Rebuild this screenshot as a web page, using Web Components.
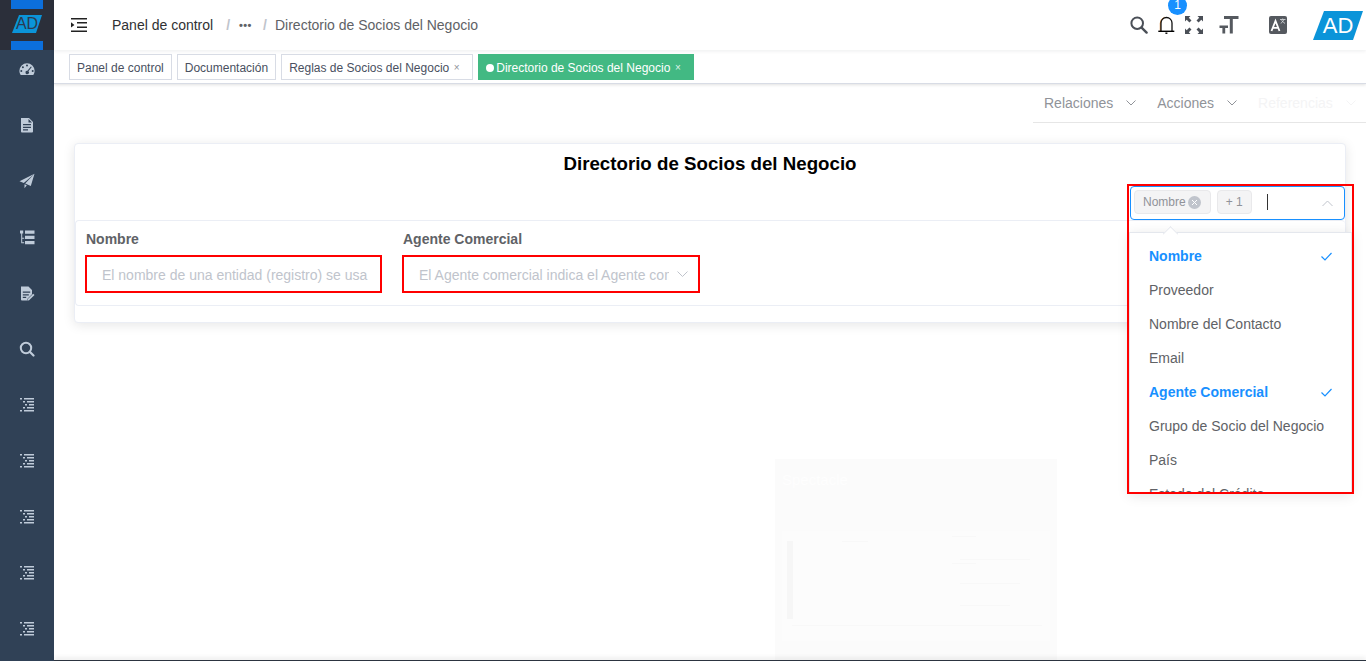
<!DOCTYPE html>
<html lang="es">
<head>
<meta charset="utf-8">
<title>Directorio de Socios del Negocio</title>
<style>
	html, body { margin: 0; height: 100%; overflow: hidden; }
	body { font-family: "Liberation Sans", Arial, sans-serif; font-size: 14px; background: #fff; }
</style>
</head>
<body>
<app-shell>
	<side-bar slot="side"></side-bar>
	<nav-bar slot="top"></nav-bar>
	<tags-view slot="top"></tags-view>
	<action-strip></action-strip>
	<search-card title="Directorio de Socios del Negocio">
		<field-box label="Nombre" hint="El nombre de una entidad (registro) se usa como"></field-box>
		<field-box label="Agente Comercial" hint="El Agente comercial indica el Agente comercial" chevron></field-box>
	</search-card>
	<ghost-shot></ghost-shot>
</app-shell>

<script>
const icons = {
	gauge: '<path fill="currentColor" fill-rule="evenodd" d="M8 2.2a7.6 7.6 0 0 0-7.6 7.6c0 1.6.5 3 1.3 4.2h12.6c.8-1.200 1.300-2.600 1.300-4.200A7.600 7.600 0 0 0 8 2.200zM8 3.600a1 1 0 1 1 0 2 1 1 0 0 1 0-2zM3.900 5.300a1 1 0 1 1 0 2 1 1 0 0 1 0-2zM2.300 9.100a1 1 0 1 1 0 2 1 1 0 0 1 0-2zM13.700 9.100a1 1 0 1 1 0 2 1 1 0 0 1 0-2zM11.900 5.400l.9.600-3.400 4.300a1.700 1.700 0 1 1-1-.5z"/>',
	doc: '<path fill="currentColor" fill-rule="evenodd" d="M2 1h8l4 4v9.500a.9.900 0 0 1-.9.900H2.900a.9.900 0 0 1-.9-.9zM9.500 2v3.500H13zM4 7v1.300h8V7zM4 9.700V11h8V9.700zM4 12.300v1.200h5v-1.200z"/>',
	send: '<path fill="currentColor" d="M15.500.8.500 8.300l4.300 1.800zM15.500.8 6.200 10.600l5.600 2.500zM5.500 11.200v4l2.300-3z"/>',
	tree: '<path fill="currentColor" d="M1 1.500h3.200v3H3.200v4.200h2v1h-2v3.600h2v1H2.200V4.500H1zM6 1.500h9.500v3.300H6zM6 6.800h9.500V10H6zM6 12h9.500v3.200H6z"/>',
	docedit: '<path fill="currentColor" fill-rule="evenodd" d="M2 1.500h7.500L13 5v4.200l-4.500 4.600-.4 1.700H2.900a.9.900 0 0 1-.9-.9zM3.800 6.500v1.300h7.400V6.500zM3.800 9.200v1.300h6V9.200zM3.800 11.800v1.200h3.400v-1.200z"/><path fill="currentColor" d="M14.200 8.700l1.300 1.300-5.400 5.300-1.700.4.400-1.700z"/>',
	search: '<path fill="none" stroke="currentColor" stroke-width="2" d="M7 1.800a5.200 5.200 0 1 0 0 10.400A5.200 5.200 0 0 0 7 1.800z"/><path fill="none" stroke="currentColor" stroke-width="2.200" stroke-linecap="round" d="M11 11l3.500 3.500"/>',
	list: '<path fill="currentColor" d="M1 1h2v1.500H1zM5 1h10v1.500H5zM4 4h2v1.500H4zM8 4h7v1.500H8zM6 7h2v1.500H6zM10 7h5v1.500h-5zM4 10h2v1.500H4zM8 10h7v1.500H8zM1 13h2v1.500H1zM5 13h10v1.500H5z"/>'
};

const svg = (name, size = 16) => `<svg width="${size}" height="${size}" viewBox="0 0 16 16">${icons[name]}</svg>`;

// plain helper, every element below just keeps its markup in the shadow root
const define = (tag, html, setup) => {
	customElements.define(tag, class extends HTMLElement {
		constructor() {
			super();
			this.attachShadow({ mode: 'open' }).innerHTML = typeof html === 'function' ? html(this) : html;
		}
		connectedCallback() {
			if (setup) setup.call(this);
		}
	});
};

define('app-shell', `
	<style>
		:host { display: flex; height: 661px; width: 1366px; overflow: hidden; position: relative; }
		.side { flex: 0 0 54px; }
		.main { flex: 1; min-width: 0; display: flex; flex-direction: column; }
		.content { flex: 1; min-height: 0; position: relative; }
		.foot { flex: 0 0 1px; background: #2c3440; box-shadow: 0 -1px 5px rgba(0, 0, 0, .3); position: relative; }
	</style>
	<div class="side"><slot name="side"></slot></div>
	<div class="main">
		<slot name="top"></slot>
		<div class="content"><slot></slot></div>
		<div class="foot"></div>
	</div>
`);

define('side-bar', `
	<style>
		:host { display: flex; flex-direction: column; height: 661px; background: #304156; color: #bfcbd9; }
		.logo { flex: 0 0 50px; background: #2b2f3a; display: flex; flex-direction: column; justify-content: space-between; align-items: center; position: relative; }
		.logo i { display: block; width: 32px; height: 9px; background: #0c6fdc; }
		.logo svg { position: absolute; left: 12px; top: 15px; }
		.logo b { position: absolute; left: 12px; top: 15px; width: 30px; text-align: center; font: 400 16px/18px "Liberation Sans", sans-serif; color: #2b3a4f; }
		nav { display: flex; flex-direction: column; align-items: center; gap: 40px; padding-top: 11px; }
		nav svg { display: block; }
	</style>
	<div class="logo">
		<i></i>
		<svg width="30" height="18" viewBox="0 0 30 18"><path fill="#0b94d9" d="M7 0h23l-6 18H0z"/></svg>
		<b>AD</b>
		<i></i>
	</div>
	<nav>
		${['gauge', 'doc', 'send', 'tree', 'docedit', 'search', 'list', 'list', 'list', 'list', 'list'].map(n => svg(n)).join('')}
	</nav>
`);

define('nav-bar', `
	<style>
		:host { display: flex; align-items: center; height: 50px; flex: 0 0 50px; background: #fff; box-shadow: 0 1px 4px rgba(0, 21, 41, .08); position: relative; z-index: 2; padding-left: 17px; color: #303133; }
		.burger { display: block; margin-right: 25px; }
		.crumb { white-space: nowrap; }
		.sep { color: #c0c4cc; margin: 0 9px 0 13px; font-weight: 700; }
		.dots { color: #606266; font-size: 11px; letter-spacing: .4px; font-weight: 700; line-height: 1; width: 12px; white-space: nowrap; }
		.sep.two { margin: 0 8px 0 12px; }
		.last { color: #606266; }
		.tools { margin-left: auto; display: flex; align-items: center; height: 100%; position: relative; }
		.tools svg { display: block; flex: none; }
		.bell { position: relative; margin-left: 10px; }
		.count { position: absolute; left: 1px; top: -20px; width: 19px; height: 19px; border-radius: 10px; background: #1890ff; color: #fff; font-size: 12px; line-height: 19px; text-align: center; margin-left: 9px; }
		.logo { position: relative; width: 50px; height: 29px; margin: 0 3px 0 26px; }
		.logo b { position: absolute; inset: 0; text-align: center; color: #fff; font: 400 22px/29px "Liberation Sans", sans-serif; }
	</style>
	<svg class="burger" width="16" height="14" viewBox="0 0 16 14"><path fill="#222" d="M0 0h16v1.500H0zM6 4h10v1.500H6zM6 8.500h10V10H6zM0 12.500h16V14H0zM0 4.200 3.400 6.900 0 9.600z"/></svg>
	<span class="crumb">Panel de control</span>
	<span class="sep">/</span>
	<span class="dots">•••</span>
	<span class="sep two">/</span>
	<span class="crumb last">Directorio de Socios del Negocio</span>
	<div class="tools">
		<svg width="18" height="18" viewBox="0 0 18 18" style="color:#4a4f57">
			<circle cx="7.200" cy="7.200" r="5.800" fill="none" stroke="currentColor" stroke-width="2"/>
			<path stroke="currentColor" stroke-width="2.400" stroke-linecap="round" d="M11.600 11.600 16.600 16.600"/>
		</svg>
		<span class="bell">
			<svg width="18" height="18" viewBox="0 0 18 18">
				<path fill="none" stroke="#d0761f" stroke-width="1" d="M2.300 15V7a6.200 6.200 0 0 1 4-5.600"/>
				<path fill="none" stroke="#111" stroke-width="1.300" d="M3 15V7a5.500 5.500 0 0 1 11 0v8"/>
				<path stroke="#000" stroke-width="1.400" d="M.3 15.300h16"/>
				<path stroke="#000" stroke-width="1.400" d="M7.400 17.200h2"/>
			</svg>
			<span class="count">1</span>
		</span>
		<svg width="18" height="18" viewBox="0 0 18 18" style="margin-left:9px" fill="#4a4f57">
			<path d="M0 0h5.500L3.800 1.700 6.500 4.400 4.400 6.500 1.700 3.800 0 5.500zM18 0v5.500l-1.700-1.700-2.700 2.700-2.100-2.100 2.700-2.700L12.500 0zM0 18v-5.500l1.700 1.700 2.700-2.700 2.100 2.100-2.700 2.700L5.500 18zM18 18h-5.500l1.700-1.700-2.700-2.700 2.100-2.100 2.700 2.700 1.700-1.700z"/>
		</svg>
		<svg width="20" height="20" viewBox="0 0 20 20" style="margin-left:16px" fill="#55595f">
			<path d="M5 1h14.500v3h-5.700v14.500h-3V4H5zM.5 10.500H9v2.400H6.200v5.600H3.400v-5.600H.5z"/>
		</svg>
		<svg width="18" height="18" viewBox="0 0 18 18" style="margin-left:30px">
			<rect width="18" height="18" rx="2" fill="#55595f"/>
			<path fill="none" stroke="#fff" stroke-width="1.800" d="M2.500 15 6.500 5l4 10M4 11.800h5"/>
			<path fill="none" stroke="#cfd2d6" stroke-width=".9" d="M11 3.500h5.500M13.700 2.500v1M12 7.500l3-4M12.500 4.500l3.500 3"/>
		</svg>
		<span class="logo">
			<svg width="50" height="29" viewBox="0 0 50 29" style="position:absolute;left:0;top:0"><path fill="#0b94d9" d="M11 0h39L40 29H0z"/></svg>
			<b>AD</b>
		</span>
	</div>
`);

define('tag-item', el => `
	<style>
		:host { display: flex; align-items: center; height: 26px; box-sizing: border-box; border: 1px solid #d8dce5; padding: 1px 7px 0; font-size: 12px; color: #495060; background: #fff; white-space: nowrap; flex: none; }
		:host([active]) { background: #42b983; border-color: #42b983; color: #fff; }
		.dot { width: 8px; height: 8px; border-radius: 50%; background: #fff; margin-right: 2px; }
		.x { font-size: 10px; margin: 0 3px 0 2px; color: #909399; width: 11px; text-align: center; }
		:host([active]) .x { color: #dff3ea; }
	</style>
	${el.hasAttribute('active') ? '<span class="dot"></span>' : ''}<slot></slot>${el.hasAttribute('closable') ? '<span class="x">×</span>' : ''}
`);

define('tags-view', `
	<style>
		:host { display: flex; align-items: flex-start; gap: 5px; height: 34px; flex: 0 0 34px; box-sizing: border-box; padding: 4px 0 0 15px; background: #fff; border-bottom: 1px solid #d8dce5; box-shadow: 0 1px 3px rgba(0, 0, 0, .12); position: relative; z-index: 1; }
	</style>
	<tag-item>Panel de control</tag-item>
	<tag-item>Documentación</tag-item>
	<tag-item closable>Reglas de Socios del Negocio</tag-item>
	<tag-item closable active>Directorio de Socios del Negocio</tag-item>
`);

define('action-strip', `
	<style>
		:host { display: flex; justify-content: flex-end; height: 39px; box-sizing: border-box; border-bottom: 1px solid #e6e6e6; margin-left: 979px; align-items: center; color: #909399; white-space: nowrap; overflow: hidden; }
		.row { display: flex; width: 322px; flex: none; }
		.item { display: flex; align-items: center; }
		.item svg { margin-left: 13px; margin-right: 21px; }
		.faint { color: #f4f4f5; }
	</style>
	<div class="row">
		<span class="item">Relaciones<svg width="10" height="6" viewBox="0 0 10 6"><path fill="none" stroke="currentColor" d="M.5.500 5 5 9.500.500"/></svg></span>
		<span class="item">Acciones<svg width="10" height="6" viewBox="0 0 10 6"><path fill="none" stroke="currentColor" d="M.5.500 5 5 9.500.500"/></svg></span>
		<span class="item faint">Referencias<svg width="10" height="6" viewBox="0 0 10 6"><path fill="none" stroke="currentColor" d="M.5.500 5 5 9.500.500"/></svg></span>
	</div>
`);

define('search-card', el => `
	<style>
		:host { display: block; box-sizing: border-box; height: 180px; margin: 20px 20px 0; border: 1px solid #ebeef5; border-radius: 4px; background: #fff; box-shadow: 0 2px 12px rgba(0, 0, 0, .1); }
		h2 { margin: 0; height: 42px; font: 700 18.72px/40px "Liberation Sans", sans-serif; color: #000; text-align: center; }
		.pick { display: flex; justify-content: flex-end; height: 34px; }
		.panel { display: grid; grid-template-columns: 297px 298px; gap: 20px; align-content: start; height: 86px; box-sizing: border-box; padding: 9px 9px 0; border: 1px solid #ebeef5; border-radius: 4px; border-right: 0; }
	</style>
	<h2>${el.getAttribute('title')}</h2>
	<div class="pick"><multi-select></multi-select></div>
	<div class="panel"><slot></slot></div>
`);

define('field-box', el => `
	<style>
		:host { display: block; }
		label { display: block; font: 700 14px/18px "Liberation Sans", sans-serif; color: #606266; margin-bottom: 7px; margin-left: 1px; }
		.box { display: flex; align-items: center; height: 38px; box-sizing: border-box; border: 2px solid #f00; padding: 1px 10px 0 15px; color: #c0c4cc; }
		.txt { flex: 1; min-width: 0; overflow: hidden; white-space: nowrap; }
		svg { flex: none; margin-left: 8px; }
	</style>
	<label>${el.getAttribute('label')}</label>
	<div class="box">
		<span class="txt">${el.getAttribute('hint')}</span>
		${el.hasAttribute('chevron') ? '<svg width="11" height="7" viewBox="0 0 11 7"><path fill="none" stroke="#c0c4cc" d="M.5.500 5.500 5.500 10.500.500"/></svg>' : ''}
	</div>
`);

define('multi-select', `
	<style>
		:host { display: block; width: 215px; height: 34px; box-sizing: border-box; position: relative; }
		.box { display: flex; align-items: center; height: 34px; box-sizing: border-box; border: 1px solid #1890ff; border-radius: 4px; padding: 0 11px 2px 3px; background: #fff; }
		.chip { display: flex; align-items: center; height: 24px; box-sizing: border-box; background: #f4f4f5; border: 1px solid #e9e9eb; border-radius: 4px; color: #909399; font-size: 12px; padding: 0 8px; margin-right: 6px; }
		.chip.first { padding-right: 9px; }
		.chip svg { margin-left: 2px; }
		.caret { width: 1px; height: 16px; background: #333; margin-left: 9px; }
		.up { margin: 2px 0 0 auto; }
		.drop { position: absolute; left: -1px; top: 46px; width: 223px; height: 262px; box-sizing: border-box; background: #fff; border: 1px solid #e4e7ed; box-shadow: 0 2px 12px rgba(0, 0, 0, .1); padding-top: 6px; z-index: 3; }
		.arrow { position: absolute; left: 35px; top: -6px; width: 10px; height: 10px; background: #fff; border: 1px solid #e4e7ed; border-width: 1px 0 0 1px; transform: rotate(45deg) translate(1px, 1px); }
		.list { height: 254px; overflow: hidden; }
		.opt { display: flex; align-items: center; justify-content: space-between; height: 34px; padding: 0 19px 0 19px; color: #606266; white-space: nowrap; }
		.opt.on { color: #1890ff; font-weight: 700; }
		.frame { position: absolute; left: -3px; top: -2px; width: 227px; height: 310px; box-sizing: border-box; border: 2px solid #f00; pointer-events: none; z-index: 4; }
	</style>
	<div class="box">
		<span class="chip first">Nombre<svg width="13" height="13" viewBox="0 0 13 13"><circle cx="6.500" cy="6.500" r="6.500" fill="#c0c4cc"/><path stroke="#fff" d="M4 4l5 5M9 4l-5 5"/></svg></span>
		<span class="chip">+ 1</span>
		<span class="caret"></span>
		<svg class="up" width="11" height="7" viewBox="0 0 11 7"><path fill="none" stroke="#c0c4cc" d="M.5 6 5.500 1 10.500 6"/></svg>
	</div>
	<div class="drop">
		<span class="arrow"></span>
		<div class="list">
			<div class="opt on">Nombre<svg width="11" height="9" viewBox="0 0 11 9"><path fill="none" stroke="#1890ff" stroke-width="1.200" d="M.5 4.500 4 8 10.500 1"/></svg></div>
			<div class="opt">Proveedor</div>
			<div class="opt">Nombre del Contacto</div>
			<div class="opt">Email</div>
			<div class="opt on">Agente Comercial<svg width="11" height="9" viewBox="0 0 11 9"><path fill="none" stroke="#1890ff" stroke-width="1.200" d="M.5 4.500 4 8 10.500 1"/></svg></div>
			<div class="opt">Grupo de Socio del Negocio</div>
			<div class="opt">País</div>
			<div class="opt">Estado del Crédito</div>
		</div>
	</div>
	<div class="frame"></div>
`);

// the faded picture left behind in the page, barely visible
define('ghost-shot', `
	<style>
		:host { position: absolute; left: 721px; top: 375px; width: 282px; height: 202px; background: #fbfbfb; overflow: hidden; display: block; }
		.name { position: absolute; left: 7px; top: 12px; font-size: 15px; color: #fefefe; }
		.inner { position: absolute; left: 7px; top: 72px; width: 268px; height: 110px; background: #fcfcfc; }
		.bar { position: absolute; left: 5px; top: 10px; width: 6px; height: 78px; background: #f6f6f6; }
		.line { position: absolute; height: 1px; background: #f8f8f8; }
	</style>
	<span class="name">Spectacle</span>
	<div class="inner">
		<div class="bar"></div>
		<div class="line" style="left:60px;top:10px;width:26px"></div>
		<div class="line" style="left:170px;top:5px;width:24px"></div>
		<div class="line" style="left:178px;top:28px;width:70px"></div>
		<div class="line" style="left:170px;top:32px;width:24px"></div>
		<div class="line" style="left:178px;top:52px;width:60px"></div>
		<div class="line" style="left:178px;top:74px;width:50px"></div>
		<div class="line" style="left:10px;top:94px;width:250px"></div>
	</div>
`);
</script>
</body>
</html>
